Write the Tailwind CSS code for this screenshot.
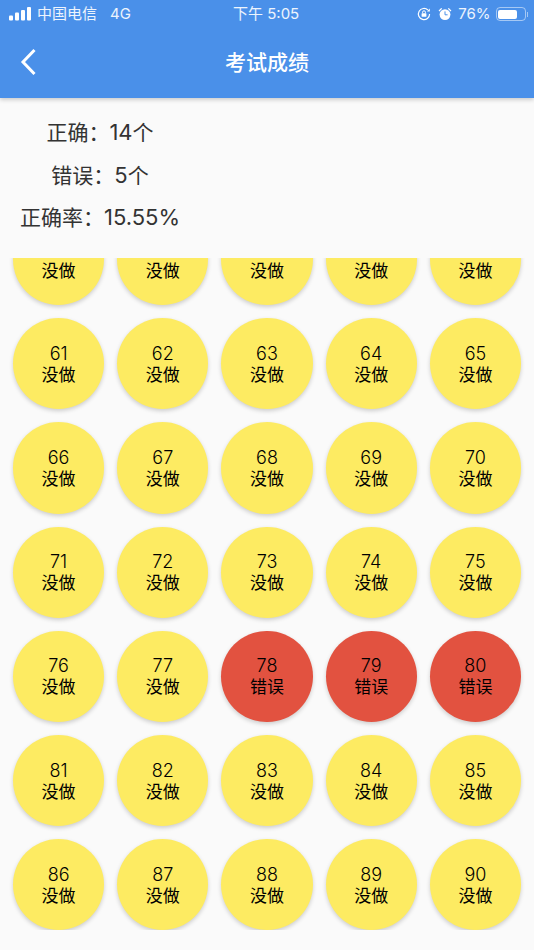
<!DOCTYPE html>
<html lang="zh">
<head>
    <meta charset="UTF-8">
    <meta name="viewport" content="width=device-width, initial-scale=1.0">
    <title>考试成绩</title>
    <script src="https://cdn.jsdelivr.net/npm/@tailwindcss/browser@4"></script>
</head>
<body class="w-[534px] h-[950px] overflow-hidden bg-[#fafafa] font-['Inter','Noto_Sans_CJK_SC',sans-serif]">
    <!-- blue header with status bar -->
    <header class="h-[98px] bg-[#4a90e9] text-white shadow-[0_2px_4px_rgba(0,0,0,0.18)] relative z-10">
        <div class="h-[28px] relative flex items-center justify-between pl-[9px] pr-[6px] text-[15px] text-white/90">
            <div class="flex items-center">
                <svg width="23" height="14" viewBox="0 0 23 14" fill="#fff" class="mr-[5px]">
                    <rect x="0" y="8.5" width="4" height="5" rx="1"/>
                    <rect x="6" y="5.5" width="4" height="8" rx="1"/>
                    <rect x="12" y="3" width="4" height="10.5" rx="1"/>
                    <rect x="18" y="0" width="4" height="13.5" rx="1"/>
                </svg>
                <span>中国电信</span>
                <span class="ml-[13px]">4G</span>
            </div>
            <div class="absolute left-[233px] top-[3px] text-[15px]">下午 5:05</div>
            <div class="flex items-center">
                <svg width="14" height="14" viewBox="0 0 14 14" fill="none" stroke="#fff" stroke-width="1.2">
                    <path d="M12.6 7a5.6 5.6 0 1 1-1.7-4"/>
                    <path d="M12.8 1.6v2.8h-2.8" fill="#fff" stroke="none"/>
                    <rect x="4.6" y="6.2" width="4.8" height="3.6" rx="0.6" fill="#fff" stroke="none"/>
                    <path d="M5.6 6.2V5.2a1.4 1.4 0 0 1 2.8 0v1" stroke-width="1"/>
                </svg>
                <svg width="14" height="14" viewBox="0 0 14 14" fill="#fff" class="ml-[7px]">
                    <circle cx="7" cy="7.6" r="5.4"/>
                    <path d="M0.6 3.4 3.2 0.9 4.2 1.8 1.4 4.5zM13.4 3.4 10.8 0.9 9.8 1.8 12.6 4.5z"/>
                    <path d="M7 4.4v3.4h2.6" fill="none" stroke="#4a90e9" stroke-width="1"/>
                </svg>
                <span class="ml-[6px]">76%</span>
                <div class="flex items-center ml-[5px]">
                    <div class="w-[30px] h-[14px] rounded-[4px] border border-white/50 p-[1.5px]">
                        <div class="h-full w-[19px] bg-white rounded-[2px]"></div>
                    </div>
                    <div class="w-[1.5px] h-[5px] bg-white/50 ml-[1px]"></div>
                </div>
            </div>
        </div>
        <div class="h-[70px] relative flex items-center justify-center">
            <svg width="18" height="28" viewBox="0 0 18 28" fill="none" stroke="#fff" stroke-width="3" class="absolute left-[20px] top-[20px]">
                <path d="M14.5 2 3 14l11.5 12"/>
            </svg>
            <h1 class="text-[21px] font-medium">考试成绩</h1>
        </div>
    </header>

    <!-- score summary -->
    <section class="h-[160px] w-[200px] flex flex-col items-center gap-[12.5px] pt-[19px] text-[21px] text-[#333]">
        <p class="h-[30px] leading-[30px]">正确：<span class="text-[22px]">14</span>个</p>
        <p class="h-[30px] leading-[30px]">错误：<span class="text-[22px]">5</span>个</p>
        <p class="h-[30px] leading-[30px]">正确率：<span class="text-[22px]">15.55%</span></p>
    </section>

    <!-- scrolled answer grid -->
    <div class="h-[672px] overflow-hidden">
        <div id="grid" class="grid grid-cols-5 gap-[13px] px-[13px] -mt-[44px]"></div>
    </div>

    <script>
        const grid = document.getElementById('grid');
        for (let n = 56; n <= 90; n++) {
            const wrong = n >= 78 && n <= 80;
            const cell = document.createElement('div');
            cell.className = 'aspect-square rounded-full flex flex-col items-center justify-center gap-[1px] pt-[1px] text-[17px] leading-[21px] text-black shadow-[0_2px_4px_rgba(0,0,0,0.18)] ' + (wrong ? 'bg-[#e25240]' : 'bg-[#fdeb62]');
            cell.innerHTML = '<span class="text-[18px] font-light">' + n + '</span><span>' + (wrong ? '错误' : '没做') + '</span>';
            grid.appendChild(cell);
        }
    </script>
</body>
</html>
